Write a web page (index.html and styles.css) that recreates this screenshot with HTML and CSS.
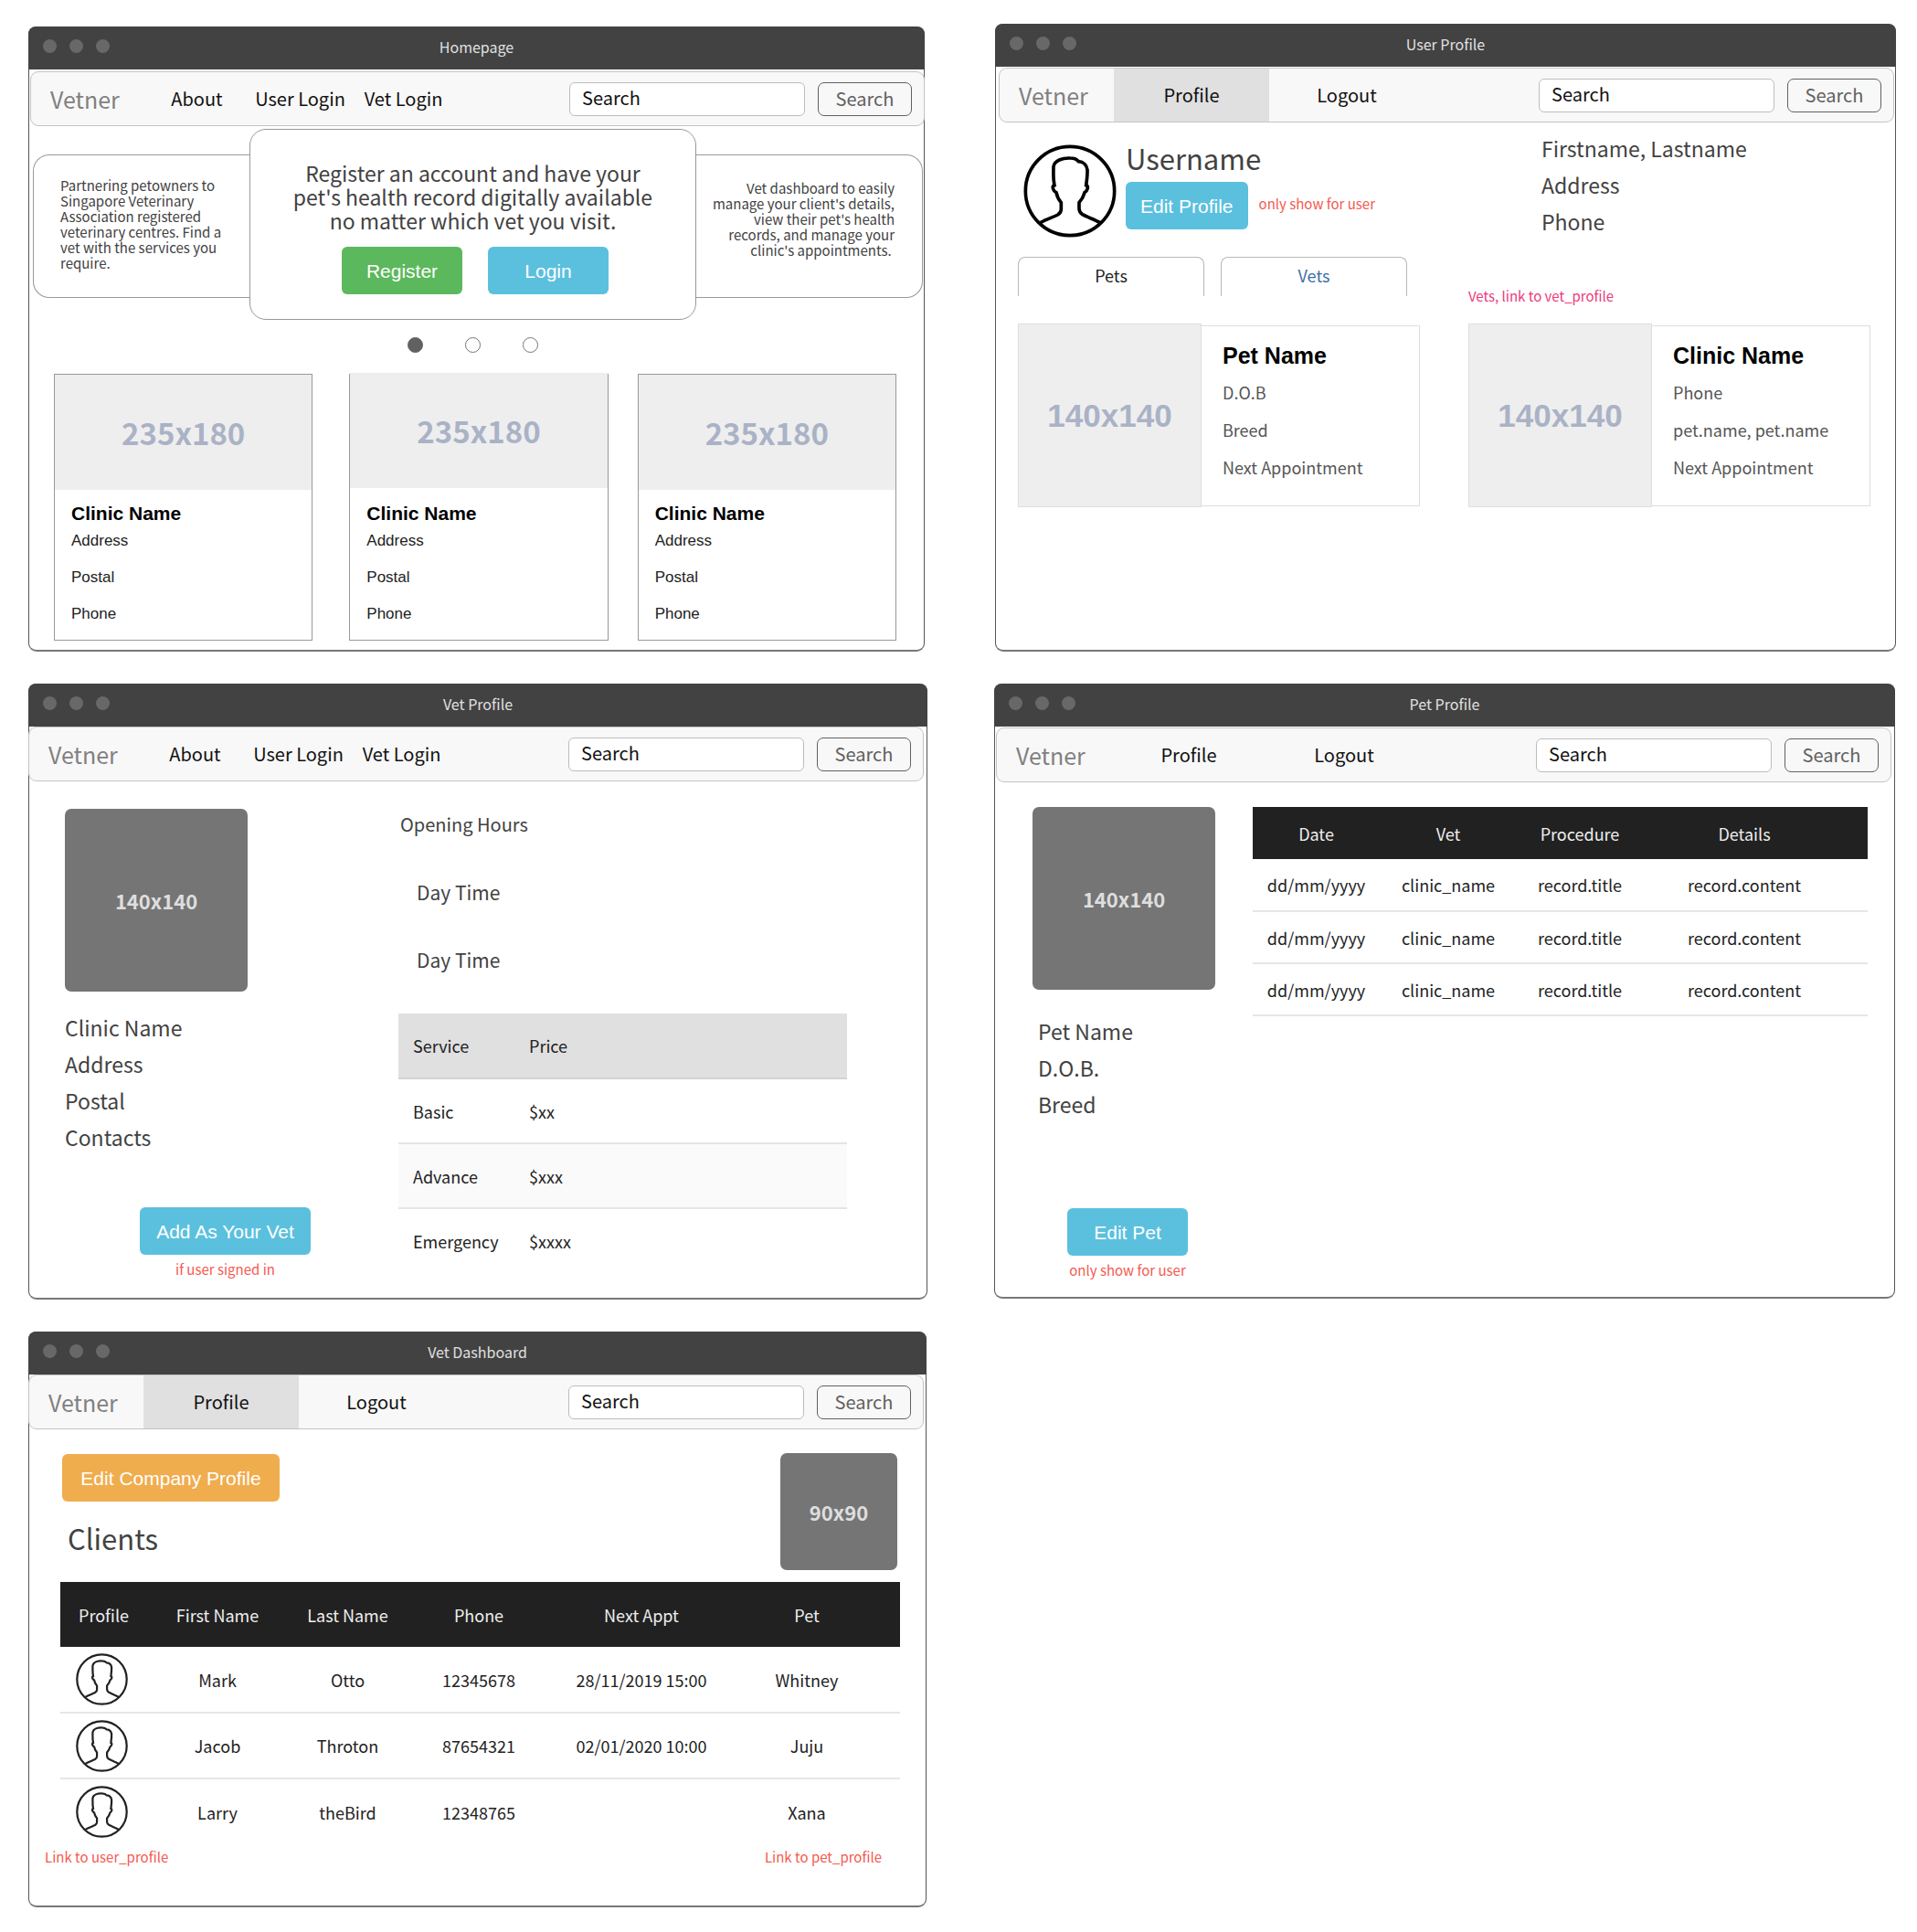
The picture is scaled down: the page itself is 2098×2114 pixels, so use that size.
FILE: index.html
```html
<!DOCTYPE html>
<html lang="en">
<head>
<meta charset="utf-8">
<title>Vetner wireframes</title>
<meta name="viewport" content="width=device-width, initial-scale=1">
<link rel="stylesheet" href="styles.css">
</head>
<body>
<svg class="defs" aria-hidden="true">
  <symbol id="person" viewBox="33 39 304 306">
    <circle cx="185" cy="192" r="146"/>
    <path d="M88 296 C108 284 128 279 145 270 Q156 263 156 252 V230 C149 222 143 213 140 197 C130 192 124 176 134 173 C129 150 131 130 131 112 C134 92 160 83 186 84 C200 84 208 88 213 95 C230 96 240 108 242 122 C243 140 240 158 238 173 C247 176 243 192 233 197 C229 212 222 222 215 230 V250 Q216 263 226 269 C244 279 264 285 284 296"/>
  </symbol>
</svg>
<main class="board">
  <div class="column column-left">

    <section class="window home">
      <header class="titlebar"><span class="lights"><i></i><i></i><i></i></span><h2>Homepage</h2></header>
      <nav class="nav">
        <a class="brand" href="#">Vetner</a>
        <a class="link" href="#">About</a>
        <a class="link" href="#">User Login</a>
        <a class="link" href="#">Vet Login</a>
        <form class="search"><input type="text" value="Search" aria-label="Search"><button type="button">Search</button></form>
      </nav>
      <div class="carousel">
        <p class="slide slide-left">Partnering petowners to Singapore Veterinary Association registered veterinary centres. Find a vet with the services you require.</p>
        <div class="slide-main">
          <p>Register an account and have your pet's health record digitally available no matter which vet you visit.</p>
          <div class="slide-actions">
            <button class="btn green" type="button">Register</button>
            <button class="btn blue" type="button">Login</button>
          </div>
        </div>
        <p class="slide slide-right">Vet dashboard to easily manage your client's details, view their pet's health records, and manage your clinic's appointments.&nbsp;</p>
      </div>
      <div class="dots">
        <input type="radio" name="slide" aria-label="Slide 1" checked>
        <input type="radio" name="slide" aria-label="Slide 2">
        <input type="radio" name="slide" aria-label="Slide 3">
      </div>
      <div class="clinics">
        <article class="clinic"><div class="thumb">235x180</div><h3>Clinic Name</h3><p>Address</p><p>Postal</p><p>Phone</p></article>
        <article class="clinic raised"><div class="thumb">235x180</div><h3>Clinic Name</h3><p>Address</p><p>Postal</p><p>Phone</p></article>
        <article class="clinic"><div class="thumb">235x180</div><h3>Clinic Name</h3><p>Address</p><p>Postal</p><p>Phone</p></article>
      </div>
    </section>

    <section class="window vet">
      <header class="titlebar"><span class="lights"><i></i><i></i><i></i></span><h2>Vet Profile</h2></header>
      <nav class="nav">
        <a class="brand" href="#">Vetner</a>
        <a class="link" href="#">About</a>
        <a class="link" href="#">User Login</a>
        <a class="link" href="#">Vet Login</a>
        <form class="search"><input type="text" value="Search" aria-label="Search"><button type="button">Search</button></form>
      </nav>
      <div class="vet-body">
        <div class="vet-side">
          <div class="photo">140x140</div>
          <ul class="facts"><li>Clinic Name</li><li>Address</li><li>Postal</li><li>Contacts</li></ul>
          <div class="action">
            <button class="btn blue" type="button">Add As Your Vet</button>
            <p class="note">if user signed in</p>
          </div>
        </div>
        <div class="vet-main">
          <div class="hours"><h3>Opening Hours</h3><p>Day Time</p><p>Day Time</p></div>
          <table class="services">
            <thead><tr><th class="service">Service</th><th>Price</th></tr></thead>
            <tbody>
              <tr><td>Basic</td><td>$xx</td></tr>
              <tr><td>Advance</td><td>$xxx</td></tr>
              <tr><td>Emergency</td><td>$xxxx</td></tr>
            </tbody>
          </table>
        </div>
      </div>
    </section>

    <section class="window dashboard">
      <header class="titlebar"><span class="lights"><i></i><i></i><i></i></span><h2>Vet Dashboard</h2></header>
      <nav class="nav">
        <a class="brand" href="#">Vetner</a>
        <a class="link wide active" href="#">Profile</a>
        <a class="link wide" href="#">Logout</a>
        <form class="search"><input type="text" value="Search" aria-label="Search"><button type="button">Search</button></form>
      </nav>
      <div class="dash-head">
        <div>
          <button class="btn orange" type="button">Edit Company Profile</button>
          <h3>Clients</h3>
        </div>
        <div class="photo small">90x90</div>
      </div>
      <table class="data clients">
        <colgroup><col class="c-profile"><col class="c-first"><col class="c-last"><col class="c-phone"><col class="c-appt"><col class="c-pet"></colgroup>
        <thead><tr><th>Profile</th><th>First Name</th><th>Last Name</th><th>Phone</th><th>Next Appt</th><th>Pet</th></tr></thead>
        <tbody>
          <tr><td><a href="#" aria-label="Mark Otto"><svg class="avatar"><use href="#person"/></svg></a></td><td>Mark</td><td>Otto</td><td>12345678</td><td>28/11/2019 15:00</td><td>Whitney</td></tr>
          <tr><td><a href="#" aria-label="Jacob Throton"><svg class="avatar"><use href="#person"/></svg></a></td><td>Jacob</td><td>Throton</td><td>87654321</td><td>02/01/2020 10:00</td><td>Juju</td></tr>
          <tr><td><a href="#" aria-label="Larry theBird"><svg class="avatar"><use href="#person"/></svg></a></td><td>Larry</td><td>theBird</td><td>12348765</td><td></td><td>Xana</td></tr>
        </tbody>
      </table>
      <div class="dash-notes"><p class="note">Link to user_profile</p><p class="note">Link to pet_profile</p></div>
    </section>
  </div>

  <div class="column column-right">
    <section class="window user">
      <header class="titlebar"><span class="lights"><i></i><i></i><i></i></span><h2>User Profile</h2></header>
      <nav class="nav">
        <a class="brand" href="#">Vetner</a>
        <a class="link wide active" href="#">Profile</a>
        <a class="link wide" href="#">Logout</a>
        <form class="search"><input type="text" value="Search" aria-label="Search"><button type="button">Search</button></form>
      </nav>
      <div class="user-body">
        <div class="identity">
          <svg class="avatar large" role="img" aria-label="User picture"><use href="#person"/></svg>
          <div>
            <h3>Username</h3>
            <div class="edit"><button class="btn blue" type="button">Edit Profile</button><p class="note">only show for user</p></div>
          </div>
        </div>
        <ul class="facts contact"><li>Firstname, Lastname</li><li>Address</li><li>Phone</li></ul>
        <div class="tabs" role="tablist">
          <button type="button" role="tab" aria-selected="true">Pets</button>
          <button type="button" role="tab" aria-selected="false">Vets</button>
        </div>
        <p class="note pink">Vets, link to vet_profile</p>
        <article class="entry"><div class="thumb">140x140</div><div class="entry-text"><h4>Pet Name</h4><p>D.O.B</p><p>Breed</p><p>Next Appointment</p></div></article>
        <article class="entry"><div class="thumb">140x140</div><div class="entry-text"><h4>Clinic Name</h4><p>Phone</p><p>pet.name, pet.name</p><p>Next Appointment</p></div></article>
      </div>
    </section>

    <section class="window pet">
      <header class="titlebar"><span class="lights"><i></i><i></i><i></i></span><h2>Pet Profile</h2></header>
      <nav class="nav">
        <a class="brand" href="#">Vetner</a>
        <a class="link wide" href="#">Profile</a>
        <a class="link wide" href="#">Logout</a>
        <form class="search"><input type="text" value="Search" aria-label="Search"><button type="button">Search</button></form>
      </nav>
      <div class="pet-body">
        <div class="pet-side">
          <div class="photo">140x140</div>
          <ul class="facts"><li>Pet Name</li><li>D.O.B.</li><li>Breed</li></ul>
          <div class="action">
            <button class="btn blue" type="button">Edit Pet</button>
            <p class="note">only show for user</p>
          </div>
        </div>
        <table class="data records">
          <colgroup><col class="r-date"><col class="r-vet"><col class="r-procedure"><col class="r-details"></colgroup>
          <thead><tr><th>Date</th><th>Vet</th><th>Procedure</th><th>Details</th></tr></thead>
          <tbody>
            <tr><td>dd/mm/yyyy</td><td>clinic_name</td><td>record.title</td><td>record.content</td></tr>
            <tr><td>dd/mm/yyyy</td><td>clinic_name</td><td>record.title</td><td>record.content</td></tr>
            <tr><td>dd/mm/yyyy</td><td>clinic_name</td><td>record.title</td><td>record.content</td></tr>
          </tbody>
        </table>
      </div>
    </section>
  </div>
</main>
</body>
</html>
```
FILE: styles.css
```css
* { box-sizing: border-box; }

body {
  margin: 0;
  background: #fff;
  color: #424242;
  font-family: "Noto Sans CJK SC", "Open Sans", sans-serif;
  font-size: 18px;
}

h2, h3, h4, p, ul { margin: 0; padding: 0; font-weight: 400; }
ul { list-style: none; }
a { color: inherit; text-decoration: none; }
button, input { font: inherit; margin: 0; }
table { border-collapse: collapse; table-layout: fixed; width: 100%; }
th { font-weight: 400; }

.defs { display: block; width: 0; height: 0; }

.board {
  display: grid;
  grid-template-columns: 984fr 987fr;
  gap: 73px;
  padding: 0 23px 25px 31px;
}
.column { display: flex; flex-direction: column; gap: 35px; min-width: 0; }
.column-left { padding-top: 29px; }
.column-right { padding-top: 26px; }

/* Window frame */
.window {
  border: 1px solid #555;
  border-top: 0;
  border-bottom: 2px solid #777;
  border-radius: 9px;
}
.titlebar {
  display: grid;
  grid-template-columns: 1fr auto 1fr;
  align-items: center;
  height: 47px;
  margin: 0 -1px;
  padding: 0 16px 4px;
  border-radius: 8px 8px 0 0;
  background: #424242;
}
.titlebar h2 { color: #e0e0e0; font-size: 16px; line-height: 24px; }
.lights { display: flex; gap: 14px; }
.lights i { width: 15px; height: 15px; border-radius: 50%; background: #686868; }

/* Navigation bar */
.nav {
  display: flex;
  height: 60px;
  position: relative;
  border: 1px solid #c4c4c4;
  border-radius: 9px;
  background: #f8f8f8;
}
.nav a { display: flex; align-items: center; }
.nav .brand { flex: 0 0 125px; padding-left: 21px; color: #808080; font-size: 25px; line-height: 30px; }
.nav .link { flex: 0 0 113px; justify-content: center; color: #111; font-size: 20px; line-height: 30px; }
.nav .wide { flex-basis: 170px; }
.nav .active { background: #e0e0e0; }
.search { display: flex; align-items: center; gap: 14px; margin-left: auto; padding-right: 13px; }
.search input, .search button { height: 37px; font-size: 20px; line-height: 30px; }
.search input {
  width: 258px;
  padding: 0 13px 3px;
  border: 1px solid #bdbdbd;
  border-radius: 6px;
  background: #fff;
  color: #111;
}
.search button {
  width: 103px;
  padding: 0;
  border: 1px solid #616161;
  border-radius: 7px;
  background: #f8f8f8;
  color: #616161;
}

/* Shared pieces */
.btn {
  min-width: 132px;
  height: 52px;
  padding: 2px 16px 0;
  border: 0;
  border-radius: 6px;
  color: #fff;
  font-family: "Liberation Sans", Arial, sans-serif;
  font-size: 21px;
}
.green { background: #5cb85c; }
.blue { background: #5bc0de; }
.orange { background: #f0ad4e; }

.note { color: #f55a50; font-size: 15px; line-height: 20px; }
.pink { color: #ec3b7c; }

.facts { font-size: 23px; line-height: 40px; }

.photo {
  display: flex;
  align-items: center;
  justify-content: center;
  width: 200px;
  height: 200px;
  border-radius: 7px;
  background: #757575;
  color: #dedede;
  font-size: 22px;
  font-weight: 700;
}
.photo.small { width: 128px; height: 128px; }

.thumb {
  display: flex;
  align-items: center;
  justify-content: center;
  background: #eee;
  color: #aab2c6;
  font-weight: 700;
}

.avatar { display: block; width: 57px; height: 57px; fill: none; stroke: #222; stroke-width: 12px; }
.avatar.large { flex: none; width: 102px; height: 102px; stroke: #000; stroke-width: 11px; }

/* Homepage */
.home { margin-right: 3px; padding-bottom: 10px; }
.home .nav { margin: 2px -1px 0 1px; }
.carousel {
  display: grid;
  grid-template-columns: 237fr 489px 248fr;
  align-items: start;
  margin: 3px 1px 0 4px;
}
.slide {
  height: 157px;
  margin-top: 28px;
  border: 1px solid #999;
  font-size: 15px;
  line-height: 17px;
}
.slide-left { padding: 24px 20px 0 29px; border-right: 0; border-radius: 18px 0 0 18px; }
.slide-right { padding: 27px 30px 0 8px; border-left: 0; border-radius: 0 18px 18px 0; text-align: right; }
.slide-main {
  padding: 34px 0 27px;
  border: 1px solid #999;
  border-radius: 18px;
  background: #fff;
  text-align: center;
}
.slide-main p { padding: 0 46px; font-size: 23px; line-height: 26px; }
.slide-actions { display: flex; justify-content: center; gap: 28px; margin-top: 16px; padding-left: 5px; }
.dots { display: flex; justify-content: center; gap: 46px; margin-top: 19px; padding-right: 8px; }
.dots input {
  appearance: none;
  width: 17px;
  height: 17px;
  border: 1px solid #757575;
  border-radius: 50%;
  background: #fff;
}
.dots input:checked { border-color: #616161; background: #616161; }
.clinics { display: flex; gap: 32px; margin: 23px 30px 0 27px; }
.clinic {
  flex: 1;
  padding-bottom: 8px;
  border: 1px solid #999;
  color: #222;
  font-family: "Liberation Sans", Arial, sans-serif;
  font-size: 17px;
  line-height: 40px;
}
.clinic .thumb { height: 126px; font-family: "Noto Sans CJK SC", sans-serif; font-size: 33px; line-height: 40px; }
.clinic h3 { margin-top: 16px; color: #000; font-size: 21px; font-weight: 700; line-height: 20px; }
.clinic h3, .clinic p { padding-left: 18px; }
.raised { margin-left: 8px; }
.raised .thumb { margin: -2px 0 18px; }

/* Vet profile */
.vet .nav { margin: 0 3px 0 -1px; }
.vet-body { display: grid; grid-template-columns: 365px 1fr; padding: 2px 87px 21px 39px; }
.vet-side { padding-top: 28px; }
.vet-side .facts { margin-top: 19px; }
.action { display: inline-flex; flex-direction: column; align-items: center; gap: 6px; }
.vet-side .action { margin: 57px 0 0 82px; }
.vet-side .btn { width: 187px; }
.vet-main { padding-top: 8px; }
.hours { padding-left: 2px; font-size: 21px; line-height: 74px; }
.hours h3 { font-size: 20px; }
.hours p { padding-left: 18px; }
.services { margin-top: 22px; color: #222; line-height: 26px; text-align: left; }
.services th, .services td { height: 71px; padding: 0 0 0 16px; }
.services tr { border-bottom: 2px solid #e4e4e4; }
.services tbody tr:last-child { border-bottom: 0; }
.services thead { background: #e0e0e0; }
.services thead tr { border-bottom-color: #d4d4d4; }
.services tbody tr:nth-child(2) { background: #fafafa; }
.services .service { width: 127px; }

/* Tables with a dark header */
.data { color: #222; line-height: 26px; text-align: center; }
.data th, .data td { height: 57px; padding: 0; }
.data thead { background: #212121; color: #eee; }
.data tbody tr { border-bottom: 2px solid #e6e6e6; }

/* Vet dashboard */
.dashboard { margin-right: 1px; padding-bottom: 43px; }
.dashboard .nav { margin: 0 2px 0 -1px; }
.dash-head { display: flex; justify-content: space-between; align-items: flex-start; padding: 26px 31px 0 36px; }
.dash-head .btn { width: 238px; margin-top: 1px; }
.dash-head h3 { margin-top: 20px; padding-left: 6px; font-size: 31px; line-height: 40px; }
.clients { width: auto; margin: 13px 28px 0 34px; }
.clients th { height: 71px; }
.clients td { height: 72px; }
.clients th:last-child, .clients td:last-child { padding-right: 21px; }
.clients td:first-child { padding-right: 4px; }
.clients tbody tr:last-child { border-bottom: 0; }
.clients .avatar { margin: 0 auto; }
.c-profile { width: 95px; }
.c-first { width: 154px; }
.c-last { width: 131px; }
.c-phone { width: 156px; }
.c-appt { width: 200px; }
.c-pet { width: 183px; }
.dash-notes { display: flex; justify-content: space-between; margin: 4px 48px 0 17px; }

/* User profile */
.user { margin-left: 1px; padding-bottom: 156px; }
.user .nav { margin: 1px 1px 0 3px; }
.user-body {
  display: grid;
  grid-template-columns: 1fr 1fr;
  column-gap: 53px;
  padding: 8px 27px 0 24px;
}
.identity { display: flex; gap: 10px; padding: 11px 0 0 6px; }
.identity .avatar { margin-top: 5px; }
.identity h3 { font-size: 31px; line-height: 40px; }
.edit { display: flex; align-items: center; gap: 12px; margin-top: 6px; }
.edit .note { padding-bottom: 5px; }
.contact { padding-left: 80px; }
.tabs { display: flex; gap: 18px; margin-top: 19px; }
.tabs button {
  width: 204px;
  height: 43px;
  padding: 0 0 4px;
  border: 1px solid #b8b8b8;
  border-bottom: 0;
  border-radius: 8px 8px 0 0;
  background: #fff;
  color: #222;
}
.tabs [aria-selected="false"] { color: #3a6ea8; }
.user .pink { margin-top: 52px; }
.entry { display: flex; align-items: center; margin-top: 20px; }
.entry .thumb {
  width: 201px;
  height: 201px;
  border: 1px solid #dedede;
  font-family: "Liberation Sans", Arial, sans-serif;
  font-size: 35px;
}
.entry-text {
  flex: 1;
  height: 198px;
  padding: 16px 0 0 23px;
  border: 1px solid #dedede;
  border-left: 0;
  line-height: 41px;
  color: #555;
}
.entry h4 { color: #000; font-family: "Liberation Sans", Arial, sans-serif; font-size: 25px; font-weight: 700; line-height: 32px; margin-bottom: 4px; }

/* Pet profile */
.pet { margin-right: 1px; padding-bottom: 19px; }
.pet .nav { margin: 1px 3px 0 1px; }
.pet-body { display: grid; grid-template-columns: 200px 1fr; column-gap: 41px; padding: 27px 29px 0 41px; align-items: start; }
.pet-side .facts { margin-top: 25px; padding-left: 6px; }
.pet-side .action { margin: 94px 0 0 38px; }
.r-date { width: 139px; }
.r-vet { width: 150px; }
.r-procedure { width: 138px; }
.records th:last-child, .records td:last-child { padding-right: 24px; }
```
